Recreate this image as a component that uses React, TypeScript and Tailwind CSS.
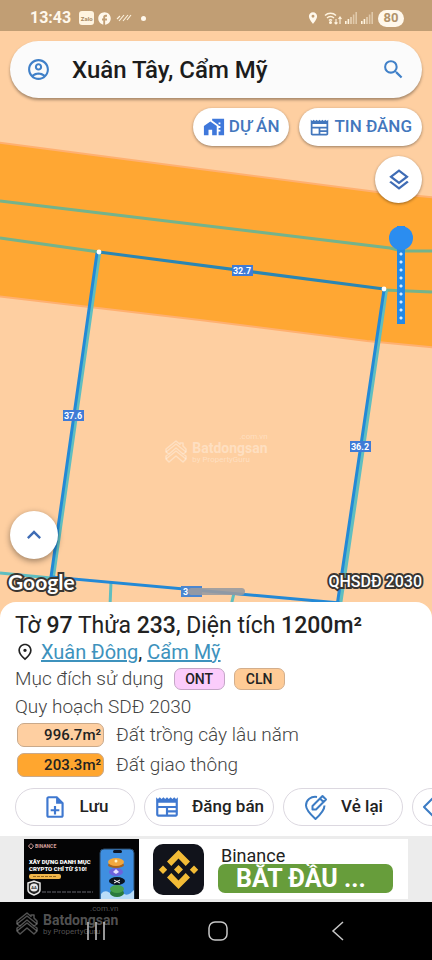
import { useState } from "react";
import {
  MdFacebook,
  MdKeyboardArrowUp,
  MdLocationOn,
  MdMapsHomeWork,
  MdNewspaper,
  MdOutlineAccountCircle,
  MdOutlineLayers,
  MdOutlineNoteAdd,
  MdOutlinePlace,
  MdSearch,
} from "react-icons/md";

interface EdgeLabelProps {
  x: number;
  y: number;
  text: string;
}

interface LandUseProps {
  area: string;
  label: string;
  color: string;
}

function SignalIcon() {
  return (
    <svg className="h-3 w-3" viewBox="0 0 12 12" fill="#fff4e0">
      <rect x="0" y="9" width="1.6" height="3" />
      <rect x="2.6" y="7" width="1.6" height="5" />
      <rect x="5.2" y="5" width="1.6" height="7" opacity="0.6" />
      <rect x="7.8" y="2.5" width="1.6" height="9.5" opacity="0.5" />
      <rect x="10.4" y="0" width="1.6" height="12" opacity="0.5" />
    </svg>
  );
}

function StatusBar() {
  return (
    <header className="flex h-[31px] shrink-0 items-center bg-[#c19e74] pt-[5px] pr-7 pl-[30px] text-[#fff8ec]">
      <span className="text-[16px] font-bold">13:43</span>
      <span className="ml-2 flex h-[14px] w-[15px] items-center justify-center rounded-[3px] bg-[#fff4e0] text-[6px] font-bold text-[#a98a64]">
        Zalo
      </span>
      <MdFacebook className="ml-[3px] h-[15px] w-[15px]" />
      <svg className="ml-1 h-2 w-4" viewBox="0 0 16 8" stroke="#fff4e0" strokeWidth="1.1" fill="none">
        <path d="M1 5 4 2M3 7 8 1M7 7 12 1M11 6 15 1" />
      </svg>
      <span className="ml-[9px] h-[5px] w-[5px] rounded-full bg-[#fff8ec]" />

      <MdLocationOn className="ml-auto h-[14px] w-[14px]" />
      <svg className="ml-1 h-[14px] w-[18px]" viewBox="0 0 18 14" fill="none" stroke="#fff4e0" strokeWidth="1.4">
        <path d="M1 4.5C4 1.5 9 1.5 12 4.5M3 7c2-2 5-2 7 0M5 9.5c1-1 2-1 3 0" />
        <path d="M12 13V8M10.5 11.5 12 13l1.5-1.5M16 13V6M14.5 8 16 6l1.5 2" strokeWidth="1.1" />
        <circle cx="6.5" cy="11.5" r="0.8" fill="#fff4e0" />
      </svg>
      <span className="ml-[3px] flex gap-1">
        <SignalIcon />
        <SignalIcon />
      </span>
      <span className="ml-[5px] flex h-[17px] w-[26px] items-center justify-center rounded-full bg-[#fff8ec] text-[13px] font-bold text-[#b1936b]">
        80
      </span>
    </header>
  );
}

function EdgeLabel({ x, y, text }: EdgeLabelProps) {
  return (
    <g>
      <rect x={x - 10} y={y - 6} width="21" height="11" fill="#3f7bd6" />
      <text x={x} y={y + 3} textAnchor="middle" fontSize="9" fontWeight="700" fill="#fff">
        {text}
      </text>
    </g>
  );
}

function ParcelMap() {
  return (
    <svg
      className="absolute inset-0 h-full w-full"
      viewBox="0 31 432 587"
      preserveAspectRatio="xMidYMid slice"
      fill="none"
    >
      <rect y="31" width="432" height="587" fill="#fecfa1" />
      {/* Road */}
      <path d="M-5 142 200 169 377 192 440 198V348L367 341 200 320-5 296Z" fill="#ffa733" stroke="#ffb070" strokeWidth="2" />

      {/* Neighbouring boundaries */}
      <g stroke="#74b38c" strokeWidth="3">
        <path d="M0 201 390 248 402 251H432" />
        <path d="M0 238 99 252M384 290 432 292" />
      </g>
      <g stroke="#5fbec0" strokeWidth="3">
        <path d="M0 573 51 578M111 582 110 606M234 593 231 606" />
        <path d="M99 254 53 577M386 290 339 612" strokeWidth="4" />
      </g>

      {/* Selected parcel */}
      <path d="M99 252 384 289" stroke="#2b86b3" strokeWidth="3" />
      <path d="M97 253 51 577 340 603M384 290 337 606" stroke="#2389d6" strokeWidth="3" />
      <circle cx="99" cy="252" r="2.4" fill="#fff" />
      <circle cx="384" cy="289" r="2.4" fill="#fff" />

      <EdgeLabel x={242} y={271} text="32.7" />
      <EdgeLabel x={73} y={416} text="37.6" />
      <EdgeLabel x={360} y={447} text="36.2" />
      <rect x="181" y="586" width="21" height="11" fill="#4b86d0" />
      <text x="183" y="595" fontSize="9" fontWeight="700" fill="#fff">
        3
      </text>
      <rect x="188" y="588" width="57" height="7" rx="3.5" fill="#9a9ba0" fillOpacity="0.9" />
    </svg>
  );
}

function Watermark({ dark }: { dark?: boolean }) {
  return (
    <div
      className={`pointer-events-none flex items-center gap-1 ${
        dark ? "text-[#8a8a8a]/60" : "text-white/35"
      }`}
    >
      <svg className="h-6 w-6" viewBox="0 0 24 24" fill="none" stroke="currentColor" strokeWidth="1.5" strokeLinejoin="round">
        <path d="M12 1 2 9v3l3 2-3 2v3l3 3 7-6 7 6 3-3v-3l-3-2 3-2V9l-3-3V3h-3v1.500Z" />
        <path d="m2 12 10-8 10 8M5 14l7-6 7 6M2 19l10-8 10 8" />
      </svg>
      <div className="relative leading-none">
        <span className="absolute -top-2 right-0 text-[8px]">.com.vn</span>
        <p className="text-[14px] leading-[14px] font-bold">Batdongsan</p>
        <p className="text-[8px] leading-[9px]">by PropertyGuru</p>
      </div>
    </div>
  );
}

function LandUse({ area, label, color }: LandUseProps) {
  return (
    <li className="flex h-[30px] items-center">
      <span
        className={`ml-[2px] flex h-6 w-[87px] items-center justify-end rounded-[7px] border border-[#c9a98a] pr-[2px] text-[15px] font-medium text-[#222] ${color}`}
      >
        {area}
      </span>
      <span className="ml-3 text-[19px] font-light">{label}</span>
    </li>
  );
}

function RedrawIcon() {
  return (
    <svg
      className="h-[26px] w-[26px] text-[#3c7cc4]"
      viewBox="0 0 26 26"
      fill="none"
      stroke="currentColor"
      strokeWidth="2"
      strokeLinejoin="round"
    >
      <path d="M14 3C8 2 3 6 3 11.500 3 16 7 20 12.500 25 18 20 21.500 16 21.500 11.500" />
      <path d="M9.500 15.500v-3.500L19.500 2 23 5.500 13 15.500ZM17 4.500 20.500 8" />
    </svg>
  );
}

function AdPicture() {
  return (
    <svg className="h-[60px] w-[115px] shrink-0" viewBox="0 0 115 60">
      <rect width="115" height="60" fill="#040405" />
      <path d="m7 4.5 2.5 2.5L7 10 4.500 7Z" fill="none" stroke="#d8a19c" />
      <text x="11" y="9" fontSize="5" fontWeight="700" fill="#d8a19c">
        BINANCE
      </text>
      <text x="5" y="25" fontSize="6" fontWeight="900" fill="#fff">
        XÂY DỰNG DANH MỤC
      </text>
      <text x="5" y="32" fontSize="6" fontWeight="900" fill="#fff">
        CRYPTO CHỈ TỪ $10!
      </text>
      <rect x="5" y="35" width="32" height="5" rx="2" fill="#f0b54a" />
      <path d="M9 37.500H33" stroke="#94661d" strokeDasharray="3 1" />
      <path d="M18 53H69" stroke="#35353a" strokeWidth="2" strokeDasharray="4 1" />
      <path d="M4 44 10 42l6 2v7c0 2-3 4-6 5-3-1-6-3-6-5Z" fill="#222" stroke="#e8e8e8" strokeWidth="1.5" />
      <circle cx="10" cy="48.5" r="4" fill="#e8e8e8" />
      <text x="10" y="50" textAnchor="middle" fontSize="4" fontWeight="700" fill="#222">
        AA
      </text>
      <rect x="76" y="10" width="34" height="56" rx="4" fill="#3f8fe0" stroke="#294765" />
      <path d="M77 55c4-5 8-2 10 0s8-5 12-1 8 0 11-3v9H77Z" fill="#b9dcf8" />
      <rect x="89" y="11" width="9" height="3" rx="1.5" fill="#0c1626" />
      <ellipse cx="93" cy="54" rx="7" ry="4" fill="#2a7a3c" />
      <ellipse cx="93" cy="50" rx="7" ry="4" fill="#49a04c" />
      <ellipse cx="93" cy="42" rx="8" ry="4" fill="#0b1420" />
      <path d="m90 41 6 3m0-3-6 3" stroke="#fff" />
      <ellipse cx="92" cy="33" rx="7" ry="4" fill="#6b63dd" />
      <path d="m92 30 3 3-3 2-3-2Z" fill="#e4e1ff" />
      <ellipse cx="92" cy="26" rx="8" ry="3" fill="#a8621b" />
      <ellipse cx="92" cy="23" rx="8" ry="4" fill="#f2a83e" />
      <circle cx="92" cy="22" r="1.5" fill="#fff2c8" />
    </svg>
  );
}

function BinanceLogo() {
  return (
    <svg className="h-[51px] w-[51px] shrink-0" viewBox="0 0 51 51">
      <rect width="51" height="51" rx="10" fill="#11131b" />
      <g fill="#f2bb36">
        <path d="M25.500 6 37 17.500 32.700 22 25.500 14.500 18.300 22 14 17.500Z" />
        <path d="M25.500 45 37 33.500 32.700 29 25.500 36.500 18.300 29 14 33.500Z" />
        <path d="m25.500 21 4.500 4.500-4.500 4.500-4.500-4.500ZM10 21.500l4.200 4.200L10 30l-4.200-4.300ZM41 21.500l4.200 4.200L41 30l-4.200-4.300Z" />
      </g>
    </svg>
  );
}

export default function App() {
  const [query, setQuery] = useState("Xuân Tây, Cẩm Mỹ");
  const [opacity, setOpacity] = useState(0);

  return (
    <div className="flex min-h-screen flex-col overflow-x-hidden bg-white font-[Roboto,'Noto_Sans',sans-serif] text-[#222]">
      <StatusBar />

      {/* Map */}
      <section className="relative flex grow flex-col px-[10px] pt-[10px]">
        <ParcelMap />

        <div className="relative flex h-[57px] items-center rounded-full bg-[#fbfbfb] pr-4 pl-4 shadow-[0_2px_3px_rgba(0,0,0,0.35)]">
          <button aria-label="Account" className="text-[#4080c8]">
            <MdOutlineAccountCircle className="h-[25px] w-[25px]" />
          </button>
          <input
            type="text"
            aria-label="Search"
            value={query}
            onChange={(e) => setQuery(e.target.value)}
            className="ml-[21px] w-0 grow bg-transparent text-[24px] font-medium text-[#1c1c1c] outline-none"
          />
          <button aria-label="Find" className="text-[#4080c8]">
            <MdSearch className="h-[25px] w-[25px]" />
          </button>
        </div>

        <div className="relative mt-[10px] flex justify-end gap-[10px] text-[17px] font-medium text-[#4377bd]">
          <button className="flex h-[38px] items-center gap-1 rounded-full bg-white px-[10px] shadow-[0_1px_3px_rgba(0,0,0,0.4)]">
            <MdMapsHomeWork className="h-[22px] w-[22px] text-[#3f78db]" />
            DỰ ÁN
          </button>
          <button className="flex h-[38px] items-center gap-1 rounded-full bg-white px-[10px] shadow-[0_1px_3px_rgba(0,0,0,0.4)]">
            <MdNewspaper className="h-[21px] w-[21px]" />
            TIN ĐĂNG
          </button>
        </div>

        <button
          aria-label="Layers"
          className="relative mt-[10px] flex h-[47px] w-[47px] items-center justify-center self-end rounded-full bg-white text-[#3f6cb5] shadow-[0_1px_3px_rgba(0,0,0,0.4)]"
        >
          <MdOutlineLayers className="h-[26px] w-[26px]" />
        </button>

        <input
          type="range"
          aria-label="Layer opacity"
          min={0}
          max={100}
          value={opacity}
          onChange={(e) => setOpacity(Number(e.target.value))}
          className="relative mt-[23px] mr-[9px] h-[98px] w-6 appearance-none self-end bg-transparent bg-[radial-gradient(circle,#d5ecff_1px,#2389e6_2px)] bg-size-[8px_8px] bg-top bg-repeat-y [writing-mode:vertical-lr] [&::-webkit-slider-thumb]:size-6 [&::-webkit-slider-thumb]:appearance-none [&::-webkit-slider-thumb]:rounded-full [&::-webkit-slider-thumb]:bg-[#2b8df0]"
        />

        <div className="relative mt-[116px] flex justify-center">
          <Watermark />
        </div>

        <button
          aria-label="Expand"
          className="relative mt-auto flex h-12 w-12 items-center justify-center rounded-full bg-white text-[#3f6cb5] shadow-[0_2px_6px_rgba(0,0,0,0.4)]"
        >
          <MdKeyboardArrowUp className="h-7 w-7" />
        </button>
        <div className="relative mt-[9px] mb-[22px] flex h-7 items-center justify-between text-white [-webkit-text-stroke:4px_#3a3632] [paint-order:stroke_fill]">
          <span className="-ml-[2px] font-[Lato,sans-serif] text-[21px] font-bold">Google</span>
          <span className="text-[16px] font-medium">QHSDĐ 2030</span>
        </div>
      </section>

      {/* Parcel details */}
      <section className="relative -mt-4 rounded-t-2xl bg-white pt-[10px]">
        <div className="px-[15px]">
          <h1 className="text-[23px] leading-7">
            Tờ <b className="font-medium">97</b> Thửa <b className="font-medium">233</b>, Diện tích{" "}
            <b className="font-medium">1200m²</b>
          </h1>
          <p className="flex h-6 items-center text-[20px]">
            <MdOutlinePlace className="mr-[6px] h-5 w-5" />
            <span>
              <a href="#xuan-dong" className="text-[#3d92bd] underline">
                Xuân Đông
              </a>
              ,{" "}
              <a href="#cam-my" className="text-[#3d92bd] underline">
                Cẩm Mỹ
              </a>
            </span>
          </p>
          <div className="text-[#444]">
            <p className="flex h-[30px] items-center text-[19px] font-light">
              Mục đích sử dụng
              <span className="ml-[10px] flex h-[22px] w-[51px] items-center justify-center rounded-[7px] border border-[#c4a6c6] bg-[#fbccfb] text-[14px] font-medium text-[#222]">
                ONT
              </span>
              <span className="ml-[9px] flex h-[22px] w-[51px] items-center justify-center rounded-[7px] border border-[#d3ae8c] bg-[#fecb96] text-[14px] font-medium text-[#222]">
                CLN
              </span>
            </p>
            <p className="flex h-[26px] items-center text-[19px] font-light">Quy hoạch SDĐ 2030</p>
            <ul>
              <LandUse area="996.7m²" label="Đất trồng cây lâu năm" color="bg-[#fecfa1]" />
              <LandUse area="203.3m²" label="Đất giao thông" color="bg-[#ffa62f]" />
            </ul>
          </div>
        </div>

        <div className="mt-2 mb-[10px] flex gap-[9px] overflow-hidden pl-[15px] text-[17px] font-medium *:h-[38px] *:shrink-0 *:rounded-full *:border *:border-[#dcd8e0]">
          <button className="flex w-[120px] items-center justify-center gap-3">
            <MdOutlineNoteAdd className="h-[26px] w-[26px] text-[#3f78d0]" />
            Lưu
          </button>
          <button className="flex w-[130px] items-center justify-center gap-3">
            <MdNewspaper className="h-[26px] w-[26px] text-[#3f78d0]" />
            Đăng bán
          </button>
          <button className="flex w-[120px] items-center justify-center gap-3">
            <RedrawIcon />
            Vẻ lại
          </button>
          <button aria-label="More" className="flex w-[120px] items-center pl-[9px] text-[#3c7cc4]">
            <svg className="h-[26px] w-[26px]" viewBox="0 0 26 26" fill="none" stroke="currentColor" strokeWidth="2" strokeLinejoin="round">
              <path d="M13 2 2 13l11 11 11-11Z" />
            </svg>
          </button>
        </div>
      </section>

      {/* Advert */}
      <aside className="bg-[#ececec] px-6 py-[3px]">
        <div className="flex h-[60px] items-center bg-white">
          <AdPicture />
          <div className="ml-[14px]">
            <BinanceLogo />
          </div>
          <div className="mr-[15px] ml-[14px] grow pt-[3px]">
            <p className="h-4 pl-[3px] text-[18px] leading-4">Binance</p>
            <button className="flex h-[29px] w-full items-center rounded-[7px] bg-[#679d3b] pl-[18px] text-[25px] leading-7 font-bold text-white">
              BẮT ĐẦU ...
            </button>
          </div>
        </div>
      </aside>

      {/* System navigation */}
      <nav className="relative flex h-[58px] items-center bg-black px-[74px] text-[#c8c8c8]">
        <div className="absolute top-[10px] left-[15px]">
          <Watermark dark />
        </div>
        <div className="flex grow items-center justify-between">
          <button aria-label="Recents" className="relative">
            <svg className="h-5 w-11" viewBox="0 0 44 20" fill="none" stroke="currentColor" strokeWidth="1.5">
              <path d="M14 1v18M22 1v18M30 1v18" />
            </svg>
          </button>
          <button aria-label="Home">
            <svg className="h-5 w-5" viewBox="0 0 20 20" fill="none" stroke="currentColor" strokeWidth="1.5">
              <rect x="1" y="1" width="18" height="18" rx="6" />
            </svg>
          </button>
          <button aria-label="Back">
            <svg className="h-5 w-10" viewBox="0 0 40 20" fill="none" stroke="currentColor" strokeWidth="1.5">
              <path d="M25 1 15 10l10 9" />
            </svg>
          </button>
        </div>
      </nav>
    </div>
  );
}
